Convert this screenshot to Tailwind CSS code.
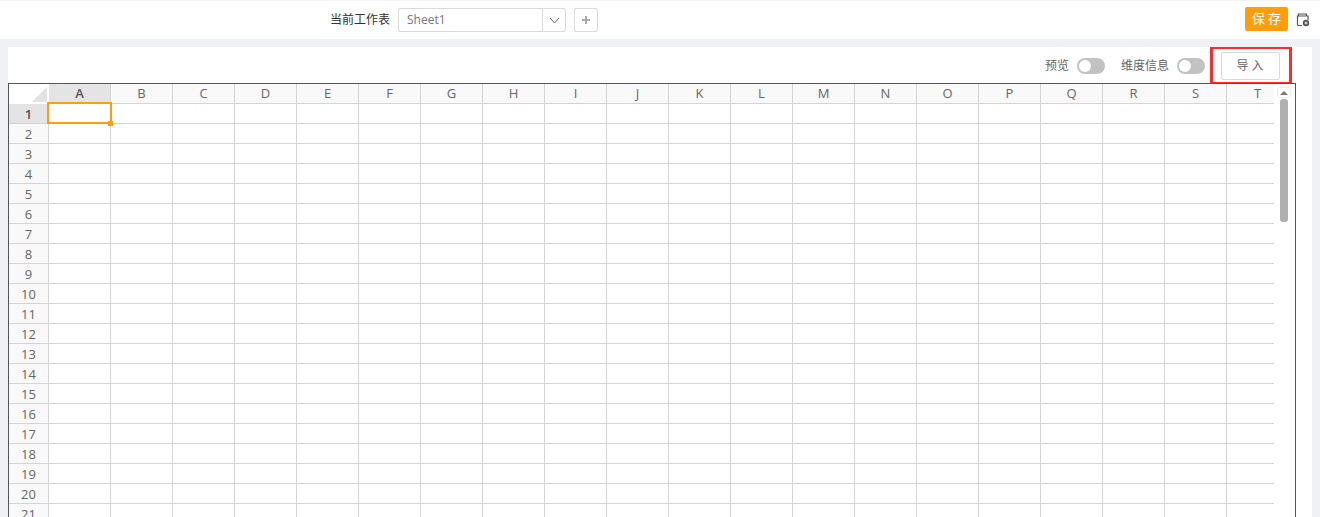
<!DOCTYPE html>
<html lang="zh-CN">
<head>
    <meta charset="utf-8"/>
    <title>导入</title>
    <script src="https://cdn.jsdelivr.net/npm/@tailwindcss/browser@4"></script>
</head>
<body class="h-[517px] overflow-hidden bg-[#f0f1f5] font-['Open_Sans','Noto_Sans_CJK_SC',sans-serif]">
    <!-- top bar -->
    <div class="h-[39px] bg-white border-t border-[#f4f4f4] flex items-start">
        <div class="ml-[330px] mt-[7px] flex items-center h-[24px]">
            <span class="text-xs text-[#333] w-[68px]">当前工作表</span>
            <div class="w-[168px] h-[24px] bg-white border border-[#d9d9d9] rounded-[2px] flex items-center">
                <span class="flex-1 pl-2 text-xs text-[#777]">Sheet1</span>
                <div class="w-[23px] h-full border-l border-[#d9d9d9] flex items-center justify-center">
                    <svg width="11" height="7" viewBox="0 0 11 7" fill="none" stroke="#666" stroke-width="1"><path d="M1 1l4.500 5 4.500-5"/></svg>
                </div>
            </div>
            <div class="ml-2 w-[24px] h-[24px] border border-[#d9d9d9] rounded-[2px] flex items-center justify-center">
                <svg width="10" height="10" viewBox="0 0 10 10" stroke="#aaa" stroke-width="2"><path d="M5 1v8M1 5h8"/></svg>
            </div>
        </div>
        <div class="ml-auto mt-[6px] mr-[10px] flex items-center h-[24px]">
            <button class="w-[43px] h-[24px] bg-[#ff9d0a] rounded-[2px] text-white text-[13px] tracking-[3px] pl-[3px]">保存</button>
            <svg class="ml-[8px] mt-[1px]" width="14" height="14" viewBox="0 0 14 14" fill="none" stroke="#555" stroke-width="1.200">
                <path d="M2.500 3V1h8v2"/>
                <path d="M6 12.500H2.500a1 1 0 0 1-1-1V3h10.500v4"/>
                <circle cx="10" cy="10" r="2.600" fill="#777" stroke="#555"/>
                <circle cx="10" cy="10" r="0.900" fill="#fff" stroke="none"/>
            </svg>
        </div>
    </div>

    <!-- main panel -->
    <div class="relative mt-[8px] mx-[8px] h-[470px] bg-white overflow-hidden">
        <div class="h-[36px] flex items-center justify-end pr-[32px] pt-[1px]">
            <span class="text-xs text-[#666]">预览</span>
            <div class="ml-2 w-[28px] h-[16px] rounded-full bg-[#c2c2c2] p-[2px]">
                <div class="w-[12px] h-[12px] rounded-full bg-white"></div>
            </div>
            <span class="ml-4 text-xs text-[#666]">维度信息</span>
            <div class="ml-2 w-[28px] h-[16px] rounded-full bg-[#c2c2c2] p-[2px]">
                <div class="w-[12px] h-[12px] rounded-full bg-white"></div>
            </div>
            <button class="ml-4 w-[59px] h-[28px] border border-[#d9d9d9] rounded-[2px] text-xs text-[#666] tracking-[3px] pl-[2px]">导入</button>
        </div>

        <!-- red highlight around the import button -->
        <div class="absolute left-[1202px] top-[-1px] w-[82px] h-[39px] border-[3px] border-[#ff2b2b]"></div>

        <!-- spreadsheet -->
        <div class="relative w-[1288px] h-[450px] border-t border-x border-[#555] overflow-hidden">
            <div class="flex h-[20px]">
                <div class="relative w-[40px] h-[20px] shrink-0 bg-white">
                    <div class="absolute right-[2px] bottom-[2px] w-0 h-0 border-l-[15px] border-l-transparent border-b-[15px] border-b-[#e2e2e2]"></div>
                </div>
                <div id="col-head" class="flex"></div>
            </div>
            <div id="rows"></div>

            <!-- vertical scrollbar -->
            <div class="absolute right-0 top-0 bottom-0 w-[21px] bg-white">
                <div class="absolute left-[3px] top-[3px] w-[14px] h-[11px] rounded-[3px] border border-[#eee] flex items-center justify-center">
                    <svg width="8" height="4" viewBox="0 0 8 4" fill="#777"><path d="M4 0l4 4H0z"/></svg>
                </div>
                <div class="absolute left-[6px] top-[15px] w-[8px] h-[123px] rounded-[3px] bg-[#b0b0b0]"></div>
            </div>
        </div>
    </div>

    <script>
    const columns = 'ABCDEFGHIJKLMNOPQRST'.split('');
    const colHead = document.getElementById('col-head');
    const rows = document.getElementById('rows');

    columns.forEach(function(name, i) {
        const cell = document.createElement('div');
        cell.textContent = name;
        cell.className = i === 0
            ? 'w-[62px] h-[20px] shrink-0 flex items-center justify-center text-[13px] font-semibold text-[#555] bg-[#e4e4e4] border-r border-b border-[#d4d4d4]'
            : 'w-[62px] h-[20px] shrink-0 flex items-center justify-center text-[13px] text-[#666] bg-[#f9f9f9] border-r border-b border-[#d4d4d4]';
        colHead.appendChild(cell);
    });

    for (let r = 1; r <= 21; r++) {
        const row = document.createElement('div');
        row.className = 'flex h-[20px]';
        const head = document.createElement('div');
        head.textContent = r;
        head.className = r === 1
            ? 'w-[40px] h-[20px] pt-[2px] shrink-0 flex items-center justify-center text-[13px] font-semibold text-[#555] bg-[#e4e4e4] border-r border-b border-[#d4d4d4]'
            : 'w-[40px] h-[20px] pt-[2px] shrink-0 flex items-center justify-center text-[13px] text-[#666] bg-[#f9f9f9] border-r border-b border-[#d4d4d4]';
        row.appendChild(head);
        columns.forEach(function() {
            const cell = document.createElement('div');
            cell.className = 'w-[62px] h-[20px] shrink-0 border-r border-b border-[#d4d4d4]';
            row.appendChild(cell);
        });
        rows.appendChild(row);
    }
    </script>

    <!-- selected cell A1 -->
    <div class="absolute left-[47px] top-[102px] w-[65px] h-[22px] border-2 border-[#ff9d0a]">
        <div class="absolute right-[-3px] bottom-[-4px] w-[5px] h-[5px] bg-[#ff9d0a]"></div>
    </div>
</body>
</html>
